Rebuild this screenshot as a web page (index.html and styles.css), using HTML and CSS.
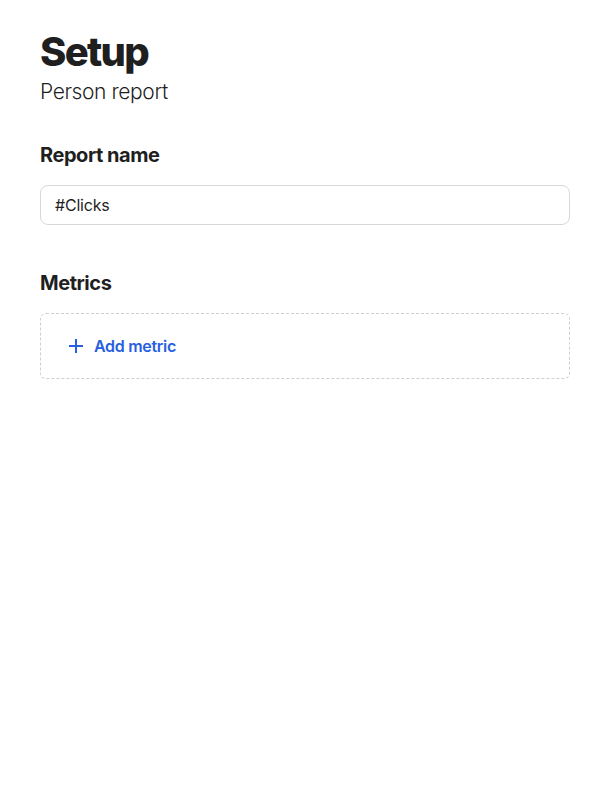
FILE: index.html
```html
<!DOCTYPE html>
<html>
<head>
<meta charset="utf-8">
<link rel="stylesheet" href="styles.css">
</head>
<body>
<main class="page">
  <header class="head">
    <h1 class="title">Setup</h1>
    <p class="subtitle">Person report</p>
  </header>
  <section class="section">
    <h2 class="label">Report name</h2>
    <div class="input">#Clicks</div>
  </section>
  <section class="section metrics">
    <h2 class="label">Metrics</h2>
    <div class="dropzone">
      <button class="add">
        <svg class="plus" width="16" height="16" viewBox="0 0 16 16"><path d="M8 1v14M1 8h14" stroke="#2660e0" stroke-width="2" fill="none"/></svg>
        <span>Add metric</span>
      </button>
    </div>
  </section>
</main>
</body>
</html>
```
FILE: styles.css
```css
html, body { margin: 0; padding: 0; background: #fff; }
body { font-family: Inter, "Noto Sans", sans-serif; color: #1f1f1f; }
.page { width: 530px; padding: 30px 0 0 40px; }
.head { display: flex; flex-direction: column; }
.title { margin: 0; font-size: 40px; font-weight: 800; letter-spacing: -1.7px; line-height: 44px; }
.subtitle { margin: 4px 0 0; font-size: 21px; font-weight: 300; letter-spacing: -0.4px; line-height: 28px; }
.section { margin-top: 35px; display: flex; flex-direction: column; }
.label { margin: 0; font-size: 20px; font-weight: 700; letter-spacing: -0.45px; line-height: 28px; }
.input { margin-top: 16px; height: 38px; border: 1px solid #d9d8d5; border-radius: 8px; padding: 0 14px; display: flex; align-items: center; font-size: 16px; letter-spacing: -0.2px; }
.metrics { margin-top: 44px; }
.dropzone { margin-top: 16px; height: 64px; border: 1px dashed #cfcfcf; border-radius: 6px; display: flex; align-items: center; padding: 0 27px; }
.add { border: 0; background: none; padding: 0; display: flex; align-items: center; gap: 10px; color: #2660e0; font-family: inherit; font-size: 16px; font-weight: 600; letter-spacing: -0.3px; cursor: pointer; }
```
